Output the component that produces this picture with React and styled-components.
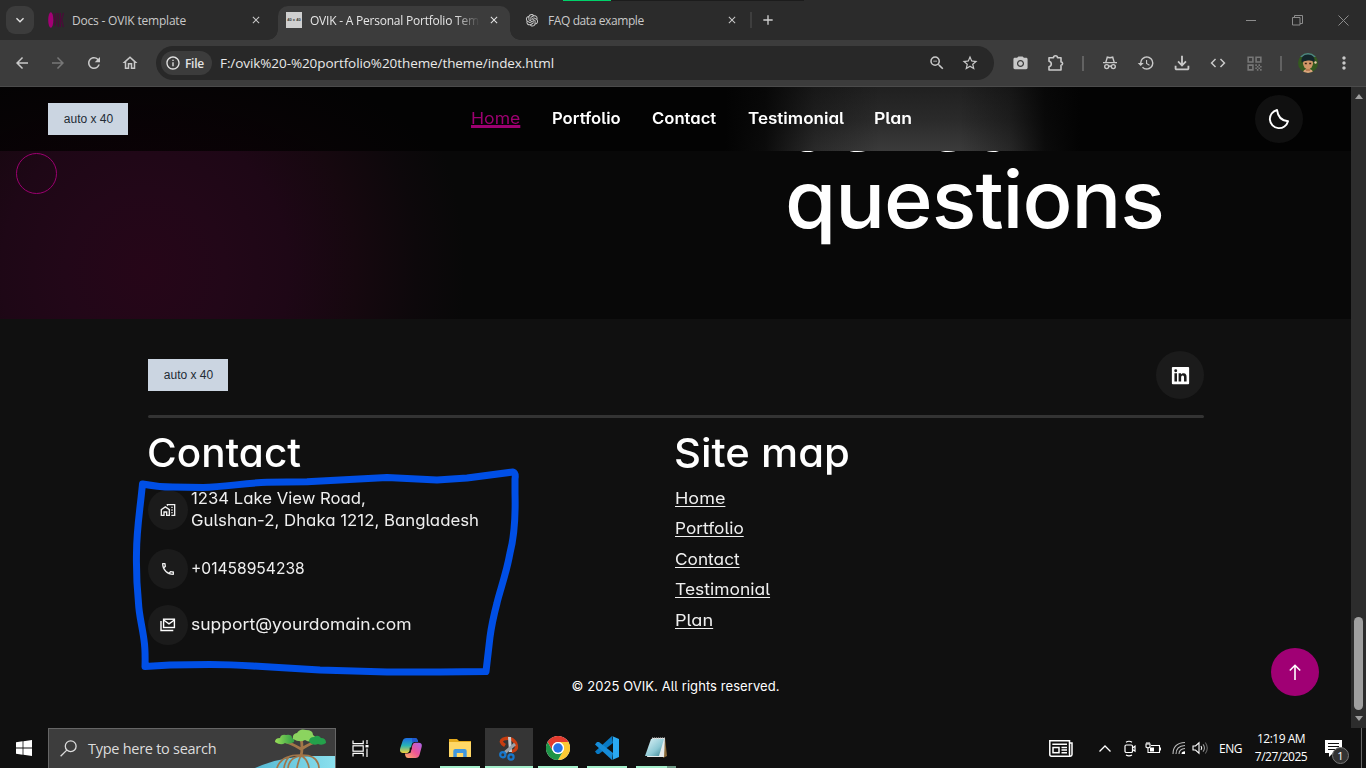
import React from "react";
import styled, { createGlobalStyle, css } from "styled-components";
import {
  MdArrowBack, MdArrowForward, MdRefresh, MdOutlineHome, MdInfoOutline, MdZoomOut, MdStarBorder,
  MdPhotoCamera, MdHistory, MdOutlineFileDownload, MdCode, MdQrCode, MdMoreVert,
  MdOutlineHomeWork, MdOutlinePhone, MdClose, MdAdd, MdKeyboardArrowDown,
} from "react-icons/md";
import { AiOutlineOpenAI } from "react-icons/ai";
import { BiLogoLinkedinSquare } from "react-icons/bi";

const GlobalStyle = createGlobalStyle`
  * { box-sizing: border-box; }
  body { margin: 0; background: #101010; overflow: hidden; }
  svg { display: block; flex: none; }
`;

const uiFont = `"Open Sans", "Noto Sans", sans-serif`;
const siteFont = `Inter, "Open Sans", sans-serif`;

const widened = css`
  display: inline-block;
  white-space: nowrap;
  transform: scaleX(${(p) => p.$wide || 1});
  transform-origin: 0 50%;
`;

const Screen = styled.div`
  width: 1366px;
  height: 768px;
  display: flex;
  flex-direction: column;
  position: relative;
  overflow: hidden;
  font-family: ${uiFont};
`;

/* ---------- browser chrome ---------- */

const TabStrip = styled.div`
  position: relative;
  height: 40px;
  flex: none;
  display: flex;
  align-items: center;
  background: #2b2b2b;
  padding-left: 6px;
`;

const LoadBar = styled.div`
  position: absolute;
  top: 0;
  left: 563px;
  width: 241px;
  height: 1px;
  background: linear-gradient(90deg, #00d26a 48px, #1c1c1c 48px);
`;

const TabSearch = styled.div`
  width: 28px;
  height: 28px;
  border-radius: 9px;
  background: #3c3c3c;
  color: #e3e3e3;
  display: grid;
  place-items: center;
`;

const Tab = styled.div`
  position: relative;
  display: flex;
  align-items: center;
  width: ${(p) => p.$w}px;
  height: 34px;
  margin-top: 6px;
  padding: 0 ${(p) => p.$end || 10}px 6px ${(p) => p.$pad || 8}px;
  color: #c9c9c9;
  ${(p) => p.$active && css`
    background: #3c3c3c;
    border-radius: 10px 10px 0 0;
    color: #e6e6e6;
    &::before, &::after {
      content: "";
      position: absolute;
      bottom: 0;
      width: 10px;
      height: 10px;
    }
    &::before { left: -10px; background: radial-gradient(circle at 0 0, transparent 9.5px, #3c3c3c 10px); }
    &::after { right: -10px; background: radial-gradient(circle at 100% 0, transparent 9.5px, #3c3c3c 10px); }
  `}
`;

const TabTitle = styled.span`
  flex: 1;
  margin-left: 8px;
  font-size: 12px;
  letter-spacing: ${(p) => p.$ls || 0}px;
  line-height: 18px;
  margin-top: 1px;
  white-space: nowrap;
  overflow: hidden;
  ${(p) => p.$fade && css`
    margin-right: 6px;
    mask-image: linear-gradient(90deg, #000 145px, transparent 170px);
  `}
`;

const SmallLogo = styled.div`
  width: 16px;
  height: 16px;
  background: #cfcfcf;
  display: grid;
  place-items: center;
  font: bold 4px/4px "Liberation Sans", sans-serif;
  color: #333;
`;

const TabDivider = styled.i`
  width: 2px;
  height: 16px;
  background: #3e3e3e;
  margin: 0 8px 0 -1px;
`;

const WindowButtons = styled.div`
  margin-left: auto;
  display: flex;
  gap: 35px;
  padding-right: 17px;
  color: #8c8c8c;
`;

const Toolbar = styled.div`
  height: 47px;
  flex: none;
  display: flex;
  align-items: center;
  background: #3c3c3c;
  border-bottom: 1px solid #4b4b4b;
  color: #c9c9c9;
`;

const NavButtons = styled.div`
  width: 156px;
  display: flex;
  align-items: center;
  gap: 18px;
  padding-left: 13px;
`;

const DimIcon = styled.span`
  color: #777;
`;

const AddressBar = styled.div`
  width: 838px;
  height: 34px;
  border-radius: 17px;
  background: #282828;
  display: flex;
  align-items: center;
  gap: 15px;
  padding: 0 15px 0 5px;
`;

const FileChip = styled.div`
  width: 51px;
  height: 24px;
  border-radius: 12px;
  background: #3c3c3c;
  display: flex;
  align-items: center;
  gap: 4px;
  padding-left: 4px;
  color: #e3e3e3;
  font-size: 12px;
  font-weight: 600;
  letter-spacing: -0.3px;
`;

const Url = styled.span`
  flex: 1;
  margin-left: -7px;
  color: #e8e8e8;
  font-size: 13.5px;
  letter-spacing: ${(p) => p.$ls}px;
`;

const Extensions = styled.div`
  flex: 1;
  display: flex;
  align-items: center;
  padding-left: 8px;
`;

const ToolCell = styled.div`
  width: 36px;
  height: 34px;
  display: grid;
  place-items: center;
  color: ${(p) => (p.$dim ? "#777" : "inherit")};
`;

const ToolDivider = styled.i`
  width: 2px;
  height: 15px;
  margin: 0 8px;
  background: #626262;
`;

/* ---------- web page ---------- */

const Viewport = styled.div`
  height: 641px;
  flex: none;
  display: flex;
`;

const Page = styled.main`
  width: 1351px;
  display: flex;
  flex-direction: column;
  font-family: ${siteFont};
  font-feature-settings: "cv11", "cv05";
  color: #fff;
  background: #080808;
`;

const SiteHeader = styled.header`
  height: 64px;
  flex: none;
  display: flex;
  align-items: center;
  padding: 0 48px;
  background:
    radial-gradient(ellipse 330px 190px at 145px 150px, rgba(26, 0, 12, 0.55), rgba(3, 3, 3, 0)),
    linear-gradient(90deg, #030303 725px, rgba(3, 3, 3, 0.85) 765px, rgba(3, 3, 3, 0.3) 815px, rgba(3, 3, 3, 0) 880px, rgba(3, 3, 3, 0) 960px, rgba(3, 3, 3, 0.35) 1010px, rgba(3, 3, 3, 0.85) 1045px, #030303 1080px),
    linear-gradient(180deg, #202020, #2a2a2a 50%, #3b3b3b);
`;

const LogoBox = styled.div`
  width: 80px;
  height: 32px;
  background: #cbd5e1;
  color: #222b35;
  font: 12px/32px "Liberation Sans", Arial, sans-serif;
  text-align: center;
  padding-left: 1px;
`;

const SiteNav = styled.nav`
  margin-left: 343px;
  display: flex;
  flex: 1;
  height: 22px;
`;

const NavCell = styled.div`
  width: ${(p) => p.$w}px;
  line-height: 21px;
`;

const SiteNavLink = styled.a`
  ${widened}
  font-size: 16px;
  line-height: 21px;
  font-weight: 600;
  ${(p) => p.$active && css`
    font-weight: 400;
    color: #9c0070;
    text-decoration: underline 3px;
    text-underline-offset: 1px;
    text-decoration-skip-ink: none;
  `}
`;

const RoundBox = styled.div`
  width: ${(p) => p.$size}px;
  height: ${(p) => p.$size}px;
  flex: none;
  border-radius: 50%;
  background: ${(p) => p.$bg};
  display: grid;
  place-items: center;
`;

const Hero = styled.section`
  height: 168px;
  flex: none;
  overflow: hidden;
  padding-left: 785px;
  background: radial-gradient(ellipse 320px 330px at 145px 120px, #260618 0%, #220718 25%, #1e0716 45%, #16080f 66%, #0d080b 85%, #080808 100%);
`;

const HeroTitle = styled.h2`
  ${widened}
  margin: -67px 0 0;
  font-size: 79px;
  line-height: 76.8px;
  font-weight: 500;
  letter-spacing: -1px;
`;

const CursorRing = styled.div`
  position: absolute;
  left: 16px;
  top: 153px;
  width: 41px;
  height: 41px;
  border: 1px solid #9c0070;
  border-radius: 50%;
`;

const Footer = styled.footer`
  flex: 1;
  background: #101010;
  padding: 32px 147px 0 148px;
`;

const FooterTop = styled.div`
  height: 64px;
  display: flex;
  justify-content: space-between;
  align-items: center;
  padding-bottom: 16px;
`;

const Rule = styled.div`
  height: 3px;
  border-radius: 2px;
  background: #333;
`;

const Columns = styled.div`
  display: grid;
  grid-template-columns: 527px 1fr;
  padding-top: 12px;
  height: 259px;
`;

const Column = styled.div`
  display: flex;
  flex-direction: column;
  align-items: flex-start;
`;

const ColumnTitle = styled.h3`
  ${widened}
  margin: 0 0 0 -1px;
  height: 46px;
  font-size: 40px;
  line-height: 46px;
  font-weight: 500;
`;

const ContactRow = styled.div`
  display: flex;
  align-items: center;
  gap: 3px;
  height: 40px;
  margin-top: ${(p) => p.$mt}px;
  font-size: 16.5px;
  line-height: 22px;
  color: #efefef;
`;

const ContactText = styled.div`
  display: flex;
  flex-direction: column;
  align-items: flex-start;
  padding-bottom: 2px;
`;

const ContactLine = styled.span`
  ${widened}
`;

const LinkList = styled.div`
  display: flex;
  flex-direction: column;
  align-items: flex-start;
  padding-top: 7px;
`;

const SiteLink = styled.a`
  ${widened}
  height: 30.4px;
  line-height: 30px;
  font-size: 16.5px;
  color: #efefef;
  text-decoration: underline 1px;
  text-underline-offset: 2px;
  text-decoration-skip-ink: none;
`;

const Copyright = styled.p`
  margin: 0 1px 0 0;
  text-align: center;
  font-size: 13px;
  line-height: 18px;
  letter-spacing: 0.07px;
`;

const ToTop = styled.div`
  position: absolute;
  left: 1271px;
  top: 648px;
`;

const Annotation = styled.svg`
  position: absolute;
  left: 0;
  top: 0;
  pointer-events: none;
`;

const Scrollbar = styled.div`
  width: 15px;
  background: #2c2c2c;
  display: flex;
  flex-direction: column;
  align-items: center;
  padding: 7px 0 7px;
`;

const Arrow = styled.i`
  border: 4.5px solid transparent;
  border-top-width: 0;
  border-bottom: 5px solid #9f9f9f;
  ${(p) => p.$down && css`transform: rotate(180deg);`}
`;

const Thumb = styled.div`
  width: 9px;
  height: 93px;
  border-radius: 5px;
  background: #9f9f9f;
  margin: auto 0 6px;
`;

/* ---------- taskbar ---------- */

const Taskbar = styled.div`
  height: 40px;
  flex: none;
  display: flex;
  background: #101010;
  color: #fff;
`;

const StartCell = styled.div`
  width: 48px;
  display: grid;
  place-items: center;
`;

const SearchBox = styled.div`
  width: 288px;
  height: 40px;
  border: 1px solid #666;
  border-bottom: 0;
  background: #3d3d3d;
  display: flex;
  align-items: center;
  padding-left: 11px;
  color: #dcdcdc;
  font-size: 14.5px;
`;

const SearchText = styled.span`
  flex: 1;
  margin-left: 11px;
  white-space: nowrap;
  letter-spacing: -0.27px;
`;

const TaskViewCell = styled.div`
  width: 51px;
  padding: 0 3px 0 0;
  display: grid;
  place-items: center;
`;

const AppCell = styled.div`
  width: 49px;
  height: 40px;
  display: flex;
  flex-direction: column;
  align-items: center;
  padding-right: 1px;
  background: ${(p) => (p.$active ? "linear-gradient(90deg, #353535 48px, transparent 48px)" : "none")};
`;

const AppIcon = styled.div`
  height: 38px;
  display: grid;
  place-items: center;
  padding: 2px 1px 0 0;
`;

const Running = styled.i`
  width: ${(p) => p.$w}px;
  height: 2px;
  background: ${(p) => (p.$multi ? "linear-gradient(90deg, #a4efcb 31px, #6f9a86 31px)" : "#a4efcb")};
`;

const Tray = styled.div`
  margin-left: auto;
  width: 317px;
  display: flex;
  align-items: center;
  font-size: 12px;
`;

const TrayItem = styled.div`
  width: ${(p) => p.$w}px;
  display: flex;
  justify-content: flex-start;
  white-space: nowrap;
  letter-spacing: -0.5px;
`;

const Clock = styled.div`
  width: 64px;
  margin-right: 12px;
  text-align: center;
  line-height: 18px;
  letter-spacing: ${(p) => p.$ls}px;
  white-space: nowrap;
`;

const Badge = styled.div`
  position: absolute;
  left: 1332px;
  top: 747px;
  width: 17px;
  height: 17px;
  border-radius: 50%;
  border: 1px solid #777;
  background: #333;
  color: #fff;
  font-size: 11px;
  line-height: 15px;
  text-align: center;
`;

const ShowDesktop = styled.i`
  width: 1px;
  height: 40px;
  background: #666;
`;

const stroke = { fill: "none", stroke: "currentColor" };

const OvikIcon = () => (
  <svg width="16" height="16" viewBox="0 0 16 16">
    <ellipse cx="2.8" cy="8" rx="2.6" ry="7.7" fill="#a30075" />
    <path d="M6 1l1.200 13L8.600 1M10.200 1v14M12.400 1v14M15.500 1l-2 7 2 7" fill="none" stroke="#4c0a39" strokeWidth="1.200" />
  </svg>
);

const Puzzle = () => (
  <svg width="18" height="18" viewBox="0 0 18 18" {...stroke} strokeWidth="1.600" strokeLinejoin="round">
    <path d="M2 3.800h4.500a2 2 0 0 1 4 0H14v4.200a1.600 1.600 0 0 1 0 3.200V16H2v-3.300q2.300-.4 2.300-2.700T2 7.200z" />
  </svg>
);

const Incognito = () => (
  <svg width="16" height="16" viewBox="0 0 16 16" {...stroke} strokeWidth="1.400">
    <path d="M1 7.600h14M3.800 7.400L5.300 2.200l2.700.6 2.700-.6 1.500 5.200" />
    <circle cx="4.700" cy="11.600" r="2" /><circle cx="11.300" cy="11.600" r="2" /><path d="M6.700 11.300q1.300-.7 2.600 0" />
  </svg>
);

const Avatar = () => (
  <svg width="20" height="20" viewBox="0 0 20 20">
    <defs><clipPath id="av"><circle cx="10" cy="10" r="10" /></clipPath></defs>
    <g clipPath="url(#av)">
      <rect width="20" height="20" fill="#34591f" />
      <path d="M0 0h20v4H0z" fill="#4e8582" />
      <path d="M5 20q0-4 5-4t5 4z" fill="#d9a37c" />
      <rect x="8" y="14" width="4" height="4" fill="#b97c52" />
      <ellipse cx="10" cy="10.300" rx="5" ry="5.800" fill="#cf9668" />
      <path d="M3.500 9.500Q2.500 1.500 10 1.500T16.500 9.500Q14.500 7 10 7.500T3.500 9.500z" fill="#14262a" />
      <path d="M6.800 10.500h2M11.200 10.500h2" stroke="#3a2415" strokeWidth="1.300" />
      <circle cx="17.500" cy="9.500" r="1.200" fill="#e8c9a8" />
    </g>
  </svg>
);

const Moon = () => (
  <svg width="22" height="22" viewBox="0 0 22 22" fill="none" stroke="#fff" strokeWidth="1.900" strokeLinejoin="round">
    <path d="M9 2A9.200 9.200 0 1 0 20 13.200Q10.500 12.800 9 2Z" />
  </svg>
);

const StackedMail = () => (
  <svg width="16" height="14" viewBox="0 0 16 14" fill="none" stroke="#fff" strokeWidth="1.400">
    <rect x="3.600" y="1.200" width="10.800" height="8.300" />
    <path d="M3.600 2l5.400 3.800L14.400 2M1 3v9.500h12.300" />
  </svg>
);

const ArrowUp = () => (
  <svg width="12" height="16" viewBox="0 0 12 16" fill="none" stroke="#fff" strokeWidth="1.600">
    <path d="M6 16V1.400M.8 6.500L6 1.300l5.200 5.200" />
  </svg>
);

const Windows = () => (
  <svg width="16" height="16" viewBox="0 0 16 16" fill="#fff">
    <path d="M0 2.200L6.600 1.300V7.600H0zM7.400 1.200L16 0v7.600H7.400zM0 8.400h6.600v6.300L0 13.800zM7.400 8.400H16V16L7.400 14.800z" />
  </svg>
);

const Search = () => (
  <svg width="17" height="17" viewBox="0 0 17 17" {...stroke} strokeWidth="1.300">
    <circle cx="10.700" cy="6.200" r="5.400" /><path d="M6.800 10.100L.6 16.300" />
  </svg>
);

const TreeArt = () => (
  <svg width="80" height="39" viewBox="0 0 80 39">
    <defs>
      <linearGradient id="water" x1="0" x2="1"><stop offset="0" stopColor="#55b9d4" /><stop offset="1" stopColor="#8be0ee" /></linearGradient>
      <linearGradient id="leaf" x1="0" x2="1"><stop offset="0" stopColor="#9ade58" /><stop offset="1" stopColor="#2d9f45" /></linearGradient>
    </defs>
    <path d="M0 39Q27 27 60 27H80V39z" fill="url(#water)" />
    <g fill="none" stroke="#a27649" strokeLinecap="round">
      <path d="M46 27Q48 19 46 9M46 20Q36 14 28 12M48 19Q56 14 61 13" strokeWidth="2.800" />
      <path d="M45 26Q26 26 22 39M45 27Q34 29 33 39M46 26Q43 33 42 39M46 26Q53 31 54 39M47 26Q63 26 64 39M34 28Q30 32 29 39" strokeWidth="1.700" />
    </g>
    <path d="M20 13q0-4 5-4 1-4 6-3 6-1 6 3 3 1 2 4-5 3-9 1-4 3-10-1z" fill="url(#leaf)" />
    <path d="M38 10q-1-5 4-6 3-5 9-3 7 0 7 5 4 2 2 5-5 3-10 0-5 3-12-1z" fill="#8bd45f" />
    <path d="M54 13q0-5 5-5 4-3 7 1 5 0 5 5-4 3-8 1-5 2-9-2z" fill="#24a14b" />
  </svg>
);

const TaskView = () => (
  <svg width="17" height="17" viewBox="0 0 17 17" fill="none" stroke="#fff" strokeWidth="1.200">
    <path d="M1 .5v3.200h10.200V.5M1 16.500v-3.200h10.200v3.200M15 0v4M15 8.500V17" />
    <rect x="1" y="5.800" width="10.200" height="5.400" /><path d="M13.500 6.200h3" strokeWidth="2.400" />
  </svg>
);

const Copilot = () => (
  <svg width="22" height="20" viewBox="0 0 22 20">
    <defs>
      <linearGradient id="cpa" x1="0" y1="0" x2="0" y2="1"><stop stopColor="#1d6be5" /><stop offset=".5" stopColor="#28b3b5" /><stop offset="1" stopColor="#f0d13a" /></linearGradient>
      <linearGradient id="cpb" x1="0" y1="1" x2="1" y2="0"><stop stopColor="#ffb163" /><stop offset=".5" stopColor="#ee5596" /><stop offset="1" stopColor="#a765ee" /></linearGradient>
    </defs>
    <path d="M6.500 0H15q2 0 2.600 2L18 4h-3.500q-2 0-2.600 2l-2 7q-.7 2-2.500 2H3q-4 0-2.700-5L2.600 3Q3.500 0 6.500 0z" fill="url(#cpa)" />
    <path d="M15.500 20H8q-2 0-2.600-2L4.900 15.500H8q2 0 2.600-2L12.500 7q.7-2.300 2.700-2.300h3.600q4 0 2.700 4.800L19.500 17q-.9 3-4 3z" fill="url(#cpb)" />
    <path d="M12 0h3q2 0 2.600 2L18 4h-3.500q-1.500 0-2.200 1z" fill="#2059cf" />
    <path d="M9.800 9.500h2.200l-1.600 5.500H7.500q1.500-.3 2-2z" fill="#101010" />
  </svg>
);

const Explorer = () => (
  <svg width="22" height="18" viewBox="0 0 22 18">
    <path d="M0 0h8l2 2h12v3H0z" fill="#e4a91c" /><path d="M0 3h22v15H0z" fill="#ffd766" />
    <path d="M4.300 18v-6q0-2 2-2h9.400q2 0 2 2v6h-3.500v-4H7.800v4z" fill="#3f97df" />
  </svg>
);

const Snip = () => (
  <svg width="20" height="25" viewBox="0 0 20 25" fill="none">
    <path d="M6 9.500Q-.5 5.500 4.500 3 12.500 .5 16.500 7 19.500 14.500 12.500 15.500" stroke="#c73d10" strokeWidth="3.400" />
    <path d="M10.500 1l1 15" stroke="#c8cdd1" strokeWidth="3" /><path d="M16 8L6 16.500" stroke="#9aa1a8" strokeWidth="3" />
    <circle cx="3.800" cy="18.700" r="2.600" stroke="#1878cc" strokeWidth="2.200" /><circle cx="12" cy="21" r="2.600" stroke="#1878cc" strokeWidth="2.200" />
  </svg>
);

const Chrome = () => (
  <svg width="24" height="24" viewBox="0 0 48 48">
    <circle cx="24" cy="24" r="24" fill="#fff" />
    <path d="M3.200 12A24 24 0 0 1 44.800 12H24a12 12 0 0 0-10.400 18z" fill="#e33b2e" />
    <path d="M44.800 12A24 24 0 0 1 24 48L34.400 30A12 12 0 0 0 24 12z" fill="#fcc934" />
    <path d="M3.200 12A24 24 0 0 0 24 48L34.400 30A12 12 0 0 1 13.600 30z" fill="#1e9447" />
    <circle cx="24" cy="24" r="12" fill="#fff" /><circle cx="24" cy="24" r="9.500" fill="#2672e8" />
  </svg>
);

const VSCode = () => (
  <svg width="24" height="24" viewBox="0 0 24 24">
    <path d="M17 0L0 15.500 2 18 4 18 18 7z" fill="#0879c4" />
    <path d="M17 24L0 8.500 2 6 4 6 18 17z" fill="#168cd8" />
    <path d="M17 0l7 3v18l-7 3q1-.5 1-2V2q0-1.500-1-2z" fill="#2aa9f3" />
  </svg>
);

const Notepad = () => (
  <svg width="24" height="22" viewBox="0 0 24 22">
    <defs><linearGradient id="np" x1="0" y1="0" x2="1" y2="1"><stop stopColor="#dff4f8" /><stop offset=".6" stopColor="#8cc8d4" /><stop offset="1" stopColor="#357f8e" /></linearGradient></defs>
    <path d="M21 1l2 18-4 2z" fill="#8c6b3a" /><path d="M8 1h13l-1 19H3z" fill="#e7ecec" />
    <path d="M7 2h13l-5 17H1z" fill="url(#np)" /><path d="M8 1.200h13" stroke="#c9cfd0" strokeWidth="1.500" strokeDasharray="1.200 .8" />
  </svg>
);

const News = () => (
  <svg width="24" height="17" viewBox="0 0 24 17" fill="none" stroke="#fff" strokeWidth="1.500">
    <path d="M20.500 3H23v11.500q0 1.700-1.700 1.700H2.500Q.8 16.200.8 14.500V.8h19.700v13.500q0 1.700 1 1.700" />
    <rect x="4" y="7.500" width="6" height="5.200" /><path d="M3.300 4.300H18M12.500 7.500H18M12.500 10H18M12.500 12.700H18" />
  </svg>
);

const Caret = () => (
  <svg width="12" height="7" viewBox="0 0 12 7" fill="none" stroke="#fff" strokeWidth="1.300"><path d="M.5 6.500L6 1l5.500 5.500" /></svg>
);

const Meet = () => (
  <svg width="12" height="17" viewBox="0 0 12 17" fill="none" stroke="#fff" strokeWidth="1.200">
    <rect x="1" y="5" width="7.500" height="7.500" rx="1.300" /><path d="M8.500 8l2.500-1.800v5L8.500 9.500M2 2.300Q5 .2 8 2.300M2 15q3 1.800 6 0" />
  </svg>
);

const Battery = () => (
  <svg width="16" height="14" viewBox="0 0 16 14" fill="none" stroke="#fff" strokeWidth="1.100">
    <path d="M1 3v3q2 1.500 4 0V3zM2 3V1M4 3V1M3 7v4.500h11.500v-7H6M15.500 6.500v3" /><path d="M5 6.500h4v4H5z" fill="#fff" stroke="none" />
  </svg>
);

const Wifi = () => (
  <svg width="14" height="14" viewBox="0 0 14 14" fill="none" stroke="#bbb" strokeWidth="1.100">
    <path d="M1 13Q1 2 13 1.500M4 13Q4 5 13 4.500M7 13q0-5 6-5.500" /><path d="M9.500 13q0-2.500 3.500-2.700V13z" fill="#fff" stroke="none" />
  </svg>
);

const Speaker = () => (
  <svg width="17" height="14" viewBox="0 0 17 14" fill="none" stroke="#fff" strokeWidth="1.100">
    <path d="M1 5h2.500L7 1.800v10.400L3.500 9H1z" /><path d="M9 5q1.500 2 0 4" /><path d="M11 3.300q3 3.700 0 7.400" stroke="#999" /><path d="M13.300 1.500q4 5.500 0 11" stroke="#666" />
  </svg>
);

const Note = () => (
  <svg width="17" height="17" viewBox="0 0 17 17"><path d="M0 0h17v13H8l-4 4v-4H0z" fill="#fff" /><path d="M3 3.500h11M3 6.500h11M3 9.500h7" stroke="#101010" strokeWidth="1.200" /></svg>
);

const headerLinks = [
  { name: "Home", w: 81, wide: 1.1, active: true },
  { name: "Portfolio", w: 100, wide: 1.04 },
  { name: "Contact", w: 96, wide: 1.04 },
  { name: "Testimonial", w: 126, wide: 1.065 },
  { name: "Plan", w: 60, wide: 1.1 },
];

const footerLinks = [["Home", 1.09], ["Portfolio", 1.045], ["Contact", 1.045], ["Testimonial", 1.058], ["Plan", 1.1]];

function BrowserChrome() {
  return (
    <>
      <TabStrip>
        <LoadBar />
        <TabSearch><MdKeyboardArrowDown size={16} /></TabSearch>
        <Tab $w={244} $pad={14} $end={16}>
          <OvikIcon />
          <TabTitle $ls={-0.2}>Docs - OVIK template</TabTitle>
          <MdClose size={12} />
        </Tab>
        <Tab $w={232} $active>
          <SmallLogo>40 x 40</SmallLogo>
          <TabTitle $fade $ls={-0.22}>OVIK - A Personal Portfolio Template</TabTitle>
          <MdClose size={12} />
        </Tab>
        <Tab $w={241} $pad={14} $end={13}>
          <AiOutlineOpenAI size={16} />
          <TabTitle $ls={-0.4}>FAQ data example</TabTitle>
          <MdClose size={12} />
        </Tab>
        <TabDivider />
        <MdAdd size={16} color="#d0d0d0" />
        <WindowButtons>
          <svg width="11" height="11" {...stroke}><path d="M0 5.500h10" /></svg>
          <svg width="11" height="11" {...stroke}><path d="M.5 2.500h7.500v7.500H.5zM2.500 2.500v-2h8v8h-2.500" /></svg>
          <svg width="11" height="11" {...stroke}><path d="M.5.5l10 10M10.500.5l-10 10" /></svg>
        </WindowButtons>
      </TabStrip>
      <Toolbar>
        <NavButtons>
          <MdArrowBack size={18} />
          <DimIcon><MdArrowForward size={18} /></DimIcon>
          <MdRefresh size={18} />
          <MdOutlineHome size={18} />
        </NavButtons>
        <AddressBar>
          <FileChip><MdInfoOutline size={16} />File</FileChip>
          <Url $ls={-0.08}>F:/ovik%20-%20portfolio%20theme/theme/index.html</Url>
          <MdZoomOut size={18} />
          <MdStarBorder size={18} />
        </AddressBar>
        <Extensions>
          <ToolCell><MdPhotoCamera size={17} /></ToolCell>
          <ToolCell><Puzzle /></ToolCell>
          <ToolDivider />
          <ToolCell><Incognito /></ToolCell>
          <ToolCell><MdHistory size={18} /></ToolCell>
          <ToolCell><MdOutlineFileDownload size={22} /></ToolCell>
          <ToolCell><MdCode size={18} /></ToolCell>
          <ToolCell $dim><MdQrCode size={19} /></ToolCell>
          <ToolDivider />
          <ToolCell><Avatar /></ToolCell>
          <ToolCell><MdMoreVert size={20} /></ToolCell>
        </Extensions>
      </Toolbar>
    </>
  );
}

function Site() {
  return (
    <Viewport>
      <Page>
        <SiteHeader>
          <LogoBox>auto x 40</LogoBox>
          <SiteNav>
            {headerLinks.map(({ name, w, wide, active }) => (
              <NavCell key={name} $w={w}>
                <SiteNavLink $wide={wide} $active={active}>{name}</SiteNavLink>
              </NavCell>
            ))}
          </SiteNav>
          <RoundBox $size={48} $bg="#101010"><Moon /></RoundBox>
        </SiteHeader>
        <Hero>
          <HeroTitle $wide={1.05}>asked<br />questions</HeroTitle>
        </Hero>
        <Footer>
          <FooterTop>
            <LogoBox>auto x 40</LogoBox>
            <RoundBox $size={48} $bg="#1b1b1b"><BiLogoLinkedinSquare size={23} /></RoundBox>
          </FooterTop>
          <Rule />
          <Columns>
            <Column>
              <ColumnTitle $wide={1.012}>Contact</ColumnTitle>
              <ContactRow $mt={14}>
                <RoundBox $size={40} $bg="#1b1b1b"><MdOutlineHomeWork size={16} /></RoundBox>
                <ContactText>
                  <ContactLine $wide={1.012}>1234 Lake View Road,</ContactLine>
                  <ContactLine $wide={1.018}>Gulshan-2, Dhaka 1212, Bangladesh</ContactLine>
                </ContactText>
              </ContactRow>
              <ContactRow $mt={19}>
                <RoundBox $size={40} $bg="#1b1b1b"><MdOutlinePhone size={16} /></RoundBox>
                <ContactText><ContactLine $wide={0.945}>+01458954238</ContactLine></ContactText>
              </ContactRow>
              <ContactRow $mt={16}>
                <RoundBox $size={40} $bg="#1b1b1b"><StackedMail /></RoundBox>
                <ContactText><ContactLine $wide={1.062}>support@yourdomain.com</ContactLine></ContactText>
              </ContactRow>
            </Column>
            <Column>
              <ColumnTitle $wide={1.045}>Site map</ColumnTitle>
              <LinkList>
                {footerLinks.map(([name, wide]) => <SiteLink key={name} $wide={wide}>{name}</SiteLink>)}
              </LinkList>
            </Column>
          </Columns>
          <Copyright>© 2025 OVIK. All rights reserved.</Copyright>
        </Footer>
      </Page>
      <Scrollbar><Arrow /><Thumb /><Arrow $down /></Scrollbar>
    </Viewport>
  );
}

function WindowsTaskbar() {
  return (
    <Taskbar>
      <StartCell><Windows /></StartCell>
      <SearchBox>
        <Search />
        <SearchText>Type here to search</SearchText>
        <TreeArt />
      </SearchBox>
      <TaskViewCell><TaskView /></TaskViewCell>
      <AppCell><AppIcon><Copilot /></AppIcon></AppCell>
      <AppCell><AppIcon><Explorer /></AppIcon><Running $w={40} /></AppCell>
      <AppCell $active><AppIcon><Snip /></AppIcon><Running $w={48} /></AppCell>
      <AppCell><AppIcon><Chrome /></AppIcon><Running $w={40} /></AppCell>
      <AppCell><AppIcon><VSCode /></AppIcon><Running $w={40} /></AppCell>
      <AppCell><AppIcon><Notepad /></AppIcon><Running $w={40} $multi /></AppCell>
      <Tray>
        <TrayItem $w={50}><News /></TrayItem>
        <TrayItem $w={25}><Caret /></TrayItem>
        <TrayItem $w={21}><Meet /></TrayItem>
        <TrayItem $w={27}><Battery /></TrayItem>
        <TrayItem $w={20}><Wifi /></TrayItem>
        <TrayItem $w={27}><Speaker /></TrayItem>
        <TrayItem $w={30}>ENG</TrayItem>
        <Clock $ls={-0.5}>12:19 AM<br />7/27/2025</Clock>
        <TrayItem $w={36}><Note /></TrayItem>
        <ShowDesktop />
      </Tray>
    </Taskbar>
  );
}

export default function App() {
  return (
    <Screen>
      <GlobalStyle />
      <BrowserChrome />
      <Site />
      <WindowsTaskbar />
      <CursorRing />
      <ToTop><RoundBox $size={48} $bg="#a00074"><ArrowUp /></RoundBox></ToTop>
      <Badge>1</Badge>
      <Annotation width="1366" height="768" fill="none" stroke="#004fe6" strokeWidth="7" strokeLinecap="round" strokeLinejoin="round">
        <path d="M142.500 484Q157 487 173 487T203 487.500C225 487 245 483 267 482.300L307 481.700 387 477.500 437 480 467 478 513 472Q516 473 515 479V493Q516 530 510 553C506 575 500 590 497 603Q492 622 490 637L486 671.500 440 672H387L320 670 253 666Q230 664.500 210 664.500L170 665 145 666.500Q145.500 650 144 640C142 625 139 615 138.500 603Q136 578 136.500 553C136.500 530 140 510 142.500 484" />
      </Annotation>
    </Screen>
  );
}
